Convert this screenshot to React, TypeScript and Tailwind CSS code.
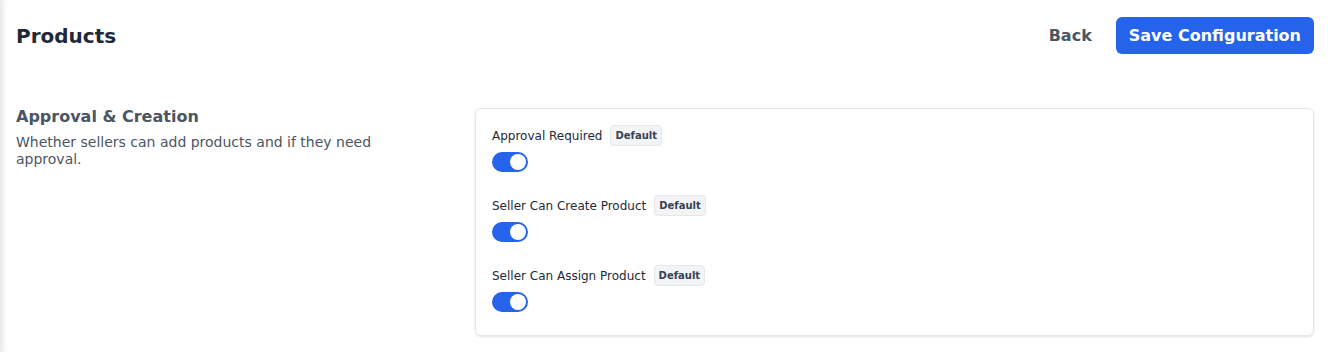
import React from "react";

function Toggle() {
  return (
    <div className="w-9 h-5 rounded-full bg-[#2563eb] flex items-center justify-end px-0.5">
      <div className="w-4 h-4 rounded-full bg-white" />
    </div>
  );
}

function Item({ label }: { label: string }) {
  return (
    <div className="flex flex-col gap-1.5">
      <div className="flex items-center gap-2 h-[21px]">
        <span className="text-[12px] text-[#1f2937]">{label}</span>
        <span className="text-[10px] font-bold text-[#374151] bg-[#f3f4f6] border border-[#e5e7eb] rounded px-[4px] leading-[19px]">Default</span>
      </div>
      <Toggle />
    </div>
  );
}

export default function App() {
  return (
    <div
      className="w-[1330px] h-[352px] bg-white px-4 shadow-[inset_7px_0_6px_-5px_rgba(0,0,0,0.12)]"
      style={{ fontFamily: '"DejaVu Sans", sans-serif' }}
    >
      <div className="flex items-center justify-between pt-[17px]">
        <h1 className="text-[20px] font-bold text-[#1f2937]">Products</h1>
        <div className="flex items-center gap-6">
          <button className="text-[16px] font-bold text-[#4b5563]">Back</button>
          <button className="h-[37px] px-[13px] rounded-md bg-[#2563eb] text-white text-[16px] font-bold">Save Configuration</button>
        </div>
      </div>
      <div className="flex mt-[54px]">
        <div className="w-[459px] shrink-0 pr-[59px]">
          <h2 className="text-[16px] font-bold text-[#4b5563] leading-5 -mt-[1px]">Approval &amp; Creation</h2>
          <p className="mt-[7px] text-[14px] text-[#4b5563] leading-[17px]">
            Whether sellers can add products and if they need approval.
          </p>
        </div>
        <div className="flex-1 border border-[#e5e7eb] rounded-md shadow-sm px-4 pt-4 pb-[23px] flex flex-col gap-[23px]">
          <Item label="Approval Required" />
          <Item label="Seller Can Create Product" />
          <Item label="Seller Can Assign Product" />
        </div>
      </div>
    </div>
  );
}
